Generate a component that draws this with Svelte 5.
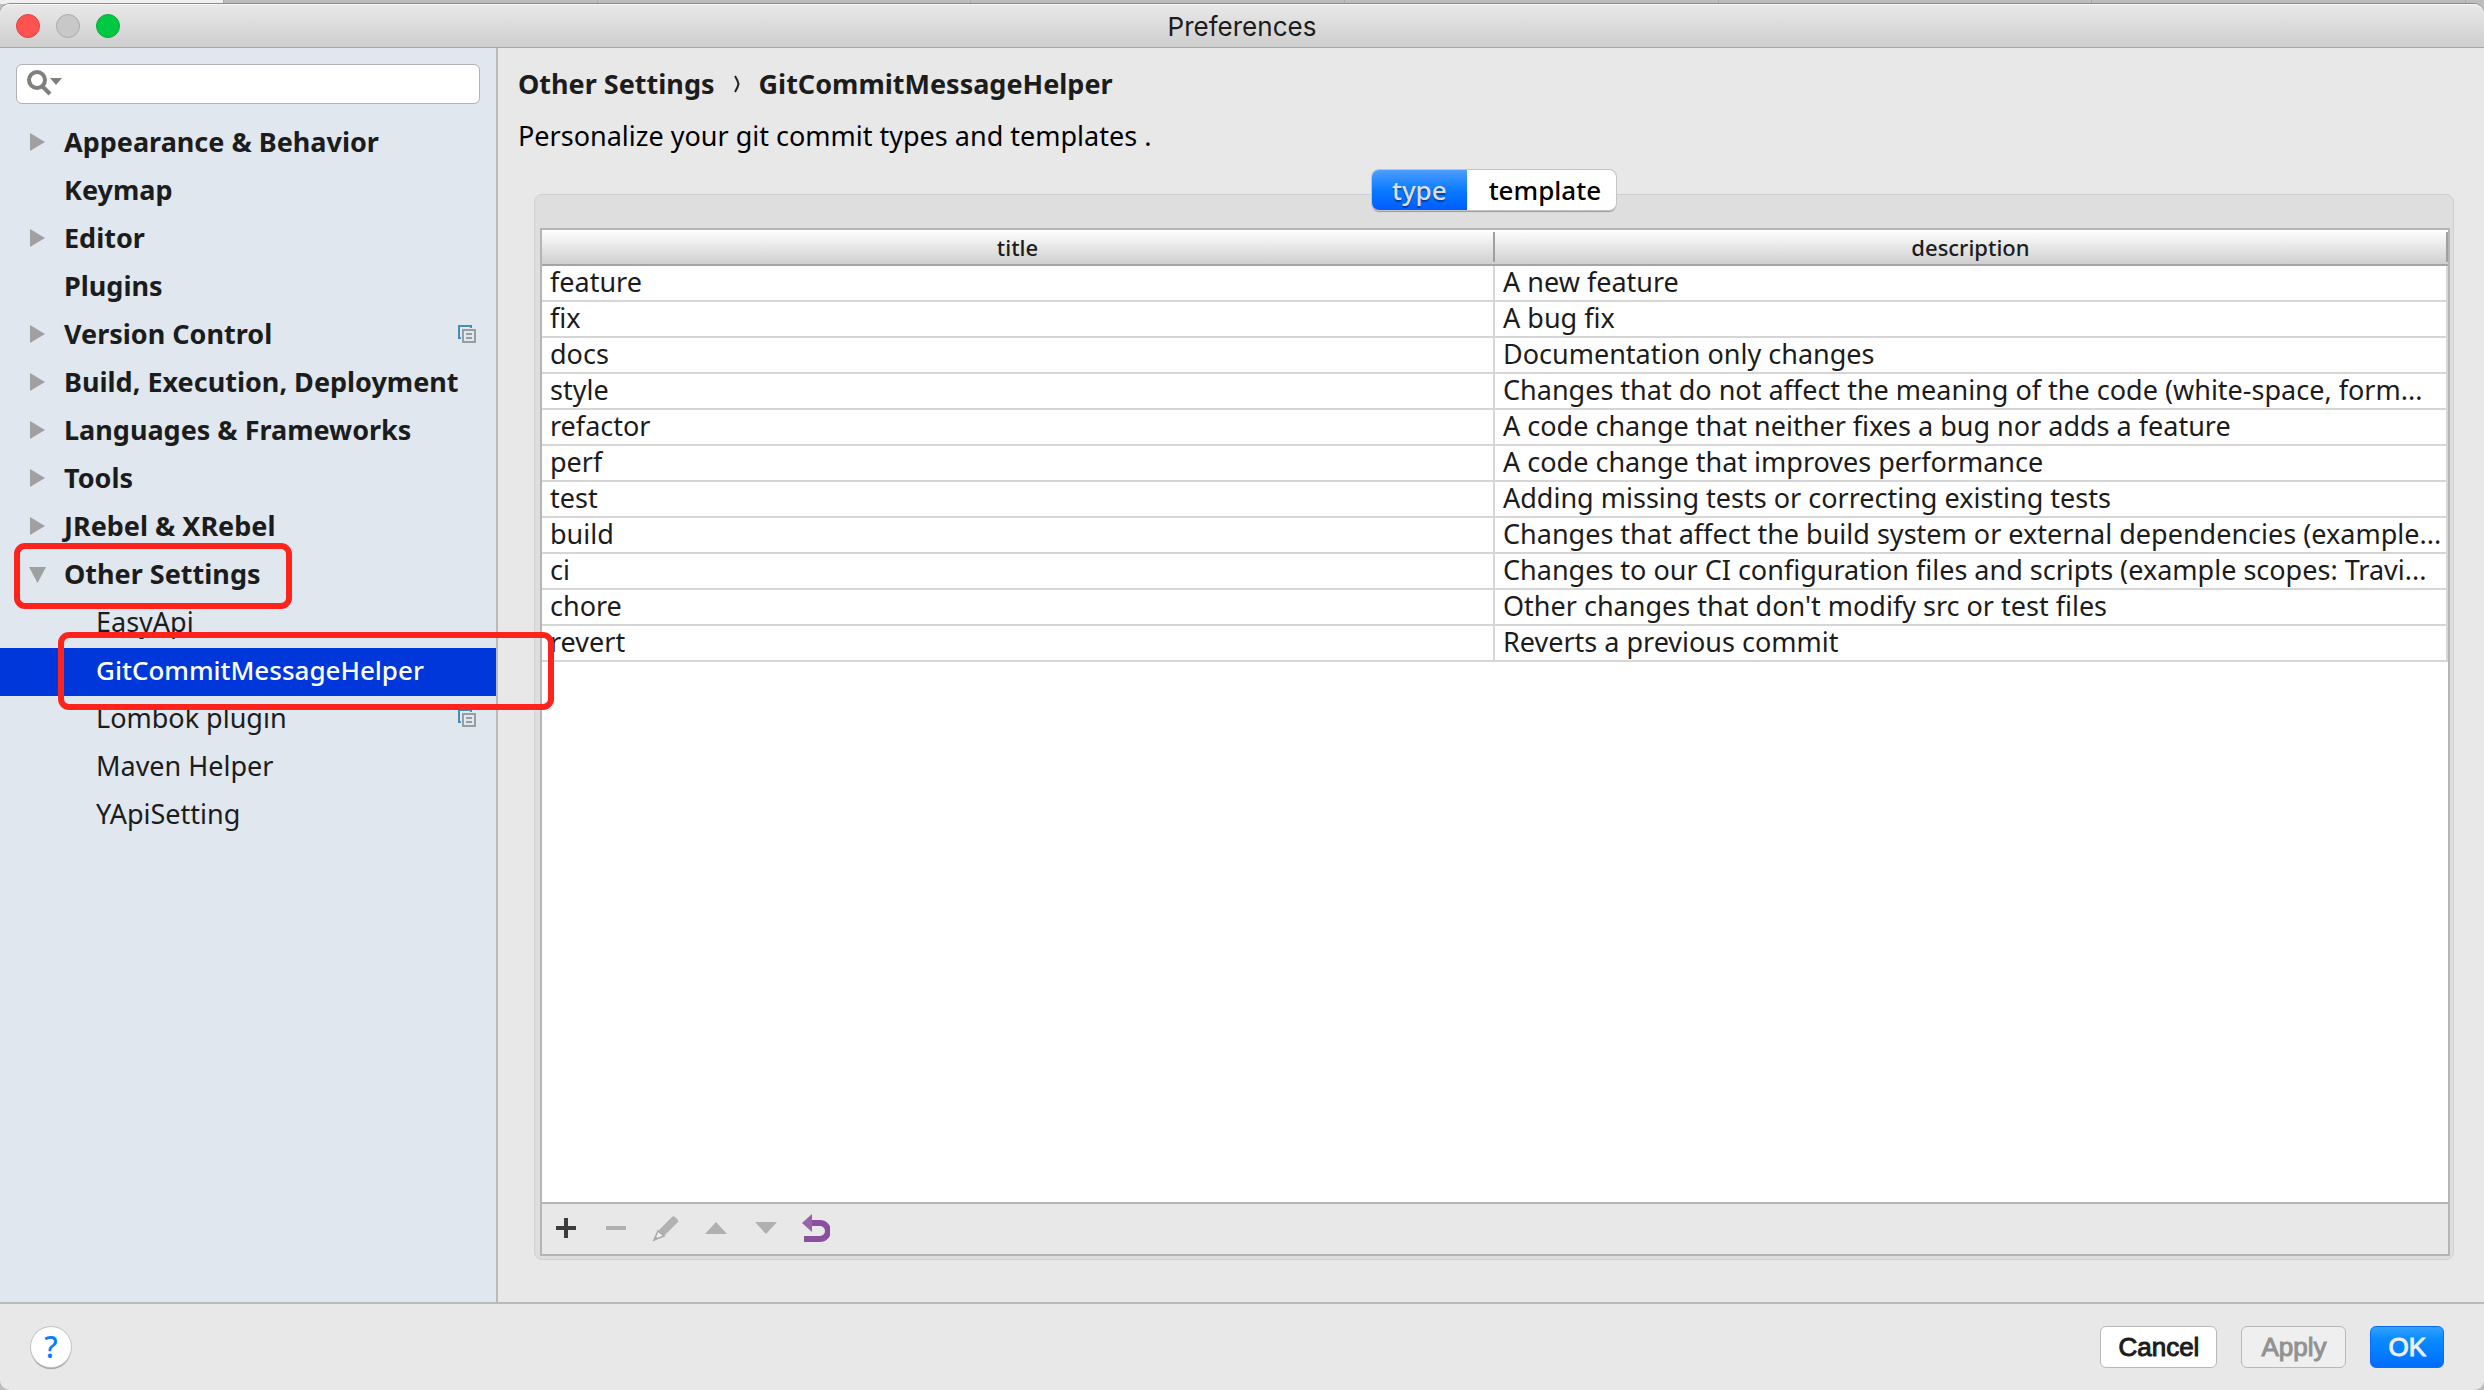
<script>
  let search = '';
  let activeTab = 'type';
  let selected = 'GitCommitMessageHelper';

  const tree = [
    { name: 'Appearance & Behavior', arrow: 'right' },
    { name: 'Keymap' },
    { name: 'Editor', arrow: 'right' },
    { name: 'Plugins' },
    { name: 'Version Control', arrow: 'right', project: true },
    { name: 'Build, Execution, Deployment', arrow: 'right' },
    { name: 'Languages & Frameworks', arrow: 'right' },
    { name: 'Tools', arrow: 'right' },
    { name: 'JRebel & XRebel', arrow: 'right' },
    { name: 'Other Settings', arrow: 'down', mark: 'parent' },
    { name: 'EasyApi', child: true },
    { name: 'GitCommitMessageHelper', child: true, mark: 'page' },
    { name: 'Lombok plugin', child: true, project: true },
    { name: 'Maven Helper', child: true },
    { name: 'YApiSetting', child: true }
  ];

  const types = [
    { title: 'feature', description: 'A new feature' },
    { title: 'fix', description: 'A bug fix' },
    { title: 'docs', description: 'Documentation only changes' },
    { title: 'style', description: 'Changes that do not affect the meaning of the code (white-space, form...' },
    { title: 'refactor', description: 'A code change that neither fixes a bug nor adds a feature' },
    { title: 'perf', description: 'A code change that improves performance' },
    { title: 'test', description: 'Adding missing tests or correcting existing tests' },
    { title: 'build', description: 'Changes that affect the build system or external dependencies (example...' },
    { title: 'ci', description: 'Changes to our CI configuration files and scripts (example scopes: Travi...' },
    { title: 'chore', description: "Other changes that don't modify src or test files" },
    { title: 'revert', description: 'Reverts a previous commit' }
  ];
</script>

<div class="screen">
  <div class="backdrop">
    <span class="front"></span>
    {#each Array(6) as _}
      <span></span>
    {/each}
  </div>
  <div class="window">
    <header class="titlebar">
      <div class="lights">
        <button class="light close" aria-label="Close"></button>
        <button class="light minimize" aria-label="Minimize" disabled></button>
        <button class="light zoom" aria-label="Zoom"></button>
      </div>
      <h1>Preferences</h1>
    </header>

    <div class="body">
      <aside>
        <label class="search">
          <svg width="36" height="30" viewBox="0 0 36 30" aria-hidden="true">
            <circle cx="10" cy="11" r="8" fill="none" stroke="#7f7f7f" stroke-width="4" />
            <path d="M15 17l8 8" stroke="#7f7f7f" stroke-width="4" />
            <path d="M23 9h12l-6 7z" fill="#7f7f7f" />
          </svg>
          <input type="text" aria-label="Search settings" bind:value={search} />
        </label>

        <ul class="tree">
          {#each tree as item}
            <li>
              <button
                class="row"
                class:child={item.child}
                class:selected={item.name === selected}
                on:click={() => (selected = item.name)}
              >
                <span class="arrow">
                  {#if item.arrow === 'right'}
                    <svg width="18" height="18" viewBox="0 0 18 18"><path d="M1 0l15 9-15 9z" fill="#a0a0a0" /></svg>
                  {:else if item.arrow === 'down'}
                    <svg width="18" height="18" viewBox="0 0 18 18"><path d="M0 2h17L8.500 18z" fill="#a0a0a0" /></svg>
                  {/if}
                </span>
                <span class="name">{item.name}</span>
                {#if item.project}
                  <svg class="project" width="18" height="18" viewBox="0 0 18 18">
                    <path d="M3 13H1V1h12v2" fill="none" stroke="#3f93bb" stroke-width="2" />
                    <path d="M5 5h12v12H5z" fill="none" stroke="#9a9da0" stroke-width="2" />
                    <path d="M8 9h6M8 13h6" stroke="#9a9da0" stroke-width="2" />
                  </svg>
                {/if}
              </button>
              {#if item.mark}
                <span class="mark {item.mark}"></span>
              {/if}
            </li>
          {/each}
        </ul>
      </aside>

      <main>
        <h2>
          <span>Other Settings</span>
          <svg width="6" height="18" viewBox="0 0 6 18" aria-hidden="true"><path d="M1 1q3 5 3.500 8Q4 12 1 17" fill="none" stroke="#222" stroke-width="2" /></svg>
          <span>GitCommitMessageHelper</span>
        </h2>
        <p>Personalize your git commit types and templates .</p>

        <div class="tabs">
          <button class:active={activeTab === 'type'} on:click={() => (activeTab = 'type')}>type</button>
          <button class:active={activeTab === 'template'} on:click={() => (activeTab = 'template')}>template</button>
        </div>

        <section class="panel">
          <div class="box">
            <table>
              <thead>
                <tr><th><span>title</span></th><th><span>description</span></th></tr>
              </thead>
              <tbody>
                {#each types as type}
                  <tr>
                    <td>{type.title}</td>
                    <td>{type.description}</td>
                  </tr>
                {/each}
              </tbody>
            </table>

            <div class="toolbar">
              <button aria-label="Add">
                <svg width="28" height="28" viewBox="0 0 28 28"><path d="M4 14h20M14 4v20" stroke="#3c3c3c" stroke-width="4" /></svg>
              </button>
              <button aria-label="Remove" disabled>
                <svg width="28" height="28" viewBox="0 0 28 28"><path d="M4 14h20" stroke="#b0b0b0" stroke-width="4" /></svg>
              </button>
              <button aria-label="Edit" disabled>
                <svg width="28" height="28" viewBox="0 0 28 28">
                  <path d="M6 17L20 3q1.500-1.500 3 0l2.500 2.500q1.500 1.500 0 3L12 22z" fill="#b2b2b2" />
                  <path d="M6 17l6 5-10 4z" fill="#efefef" stroke="#aaa" stroke-width="1.500" />
                  <path d="M2 26l1-4 3 2z" fill="#aaa" />
                </svg>
              </button>
              <button aria-label="Move up" disabled>
                <svg width="28" height="28" viewBox="0 0 28 28"><path d="M3 20L14 8l11 12z" fill="#b0b0b0" /></svg>
              </button>
              <button aria-label="Move down" disabled>
                <svg width="28" height="28" viewBox="0 0 28 28"><path d="M3 8l11 12L25 8z" fill="#b0b0b0" /></svg>
              </button>
              <button aria-label="Restore defaults">
                <svg width="28" height="28" viewBox="0 0 28 28">
                  <path d="M10 9h8a7.500 7.500 0 0 1 0 16H2" fill="none" stroke="#8a4f9e" stroke-width="6" />
                  <path d="M0 9L10 0v18z" fill="#9a62ab" />
                </svg>
              </button>
            </div>
          </div>
        </section>
      </main>
    </div>

    <footer>
      <button class="help" aria-label="Help">?</button>
      <div class="actions">
        <button>Cancel</button>
        <button disabled>Apply</button>
        <button class="primary">OK</button>
      </div>
    </footer>
  </div>
</div>

<style>
  :global(body) {
    margin: 0;
    background: #bdbdbd;
  }

  .screen {
    display: flex;
    flex-direction: column;
    min-height: 100vh;
    font-family: "Noto Sans", "Open Sans", sans-serif;
    font-size: 27px;
    line-height: 34px;
    color: #1c1c1c;
  }

  button {
    border: 0;
    padding: 0;
    background: none;
    color: inherit;
    font: inherit;
  }

  svg {
    display: block;
    flex: none;
  }

  .backdrop {
    display: flex;
    height: 4px;
    padding-right: 18px;
    background: #bdbdbd;
  }

  .backdrop span {
    flex: 1;
    border-right: 1px solid #a8a8a8;
  }

  .backdrop .front {
    flex: 0 0 223px;
    background: #f0f0f0;
  }

  .window {
    flex: 1;
    display: flex;
    flex-direction: column;
    background: #e8e8e8;
    border-radius: 10px;
  }

  .titlebar {
    display: grid;
    grid-template-columns: 1fr auto 1fr;
    align-items: center;
    box-sizing: border-box;
    height: 44px;
    padding: 0 16px;
    background: linear-gradient(#e9e9e9, #cecece);
    border-bottom: 1px solid #a6a6a6;
    border-radius: 10px 10px 0 0;
    box-shadow: 0 -1px 0 #8c8c8c, inset 0 1px 0 #f6f6f6;
  }

  .lights {
    display: flex;
    gap: 16px;
  }

  .light {
    box-sizing: border-box;
    width: 24px;
    height: 24px;
    border-radius: 50%;
    border: 1px solid #e2403e;
    background: #ff5351;
  }

  .light.minimize {
    border-color: #aaa;
    background: #c8c8c8;
  }

  .light.zoom {
    border-color: #0ba935;
    background: #00c844;
  }

  h1 {
    margin: 0;
    padding-top: 2px;
    font-family: Inter, Roboto, sans-serif;
    font-size: 26px;
    font-weight: 400;
  }

  .body {
    flex: 1;
    display: flex;
  }

  aside {
    flex: none;
    box-sizing: border-box;
    width: 498px;
    padding-top: 16px;
    background: #e0e7ee;
    border-right: 2px solid #bababa;
  }

  .search {
    display: flex;
    align-items: center;
    box-sizing: border-box;
    height: 40px;
    margin: 0 16px 16px;
    padding: 0 10px;
    background: #fff;
    border: 1px solid #b0b4b8;
    border-radius: 6px;
  }

  .search input {
    flex: 1;
    min-width: 0;
    border: 0;
    outline: 0;
    background: none;
    font: inherit;
  }

  .tree {
    margin: 0;
    padding: 0;
    list-style: none;
  }

  .tree li {
    position: relative;
  }

  .row {
    display: flex;
    align-items: center;
    box-sizing: border-box;
    width: 100%;
    height: 48px;
    padding: 0 20px 4px 29px;
    font-weight: 700;
    text-align: left;
    white-space: nowrap;
  }

  .row.child {
    font-weight: 400;
    padding-left: 61px;
  }

  .row.selected {
    background: #0037da;
    color: #fff;
    font-size: 26px;
    font-weight: 500;
  }

  .arrow {
    width: 18px;
    margin-right: 17px;
  }

  .name {
    flex: 1;
  }

  /* red outlines drawn over the tree */
  .mark {
    position: absolute;
    z-index: 1;
    box-sizing: border-box;
    border: 6px solid #ff231c;
    border-radius: 11px;
    pointer-events: none;
  }

  .mark.parent {
    top: -9px;
    left: 14px;
    width: 278px;
    height: 66px;
  }

  .mark.page {
    top: -16px;
    left: 58px;
    width: 496px;
    height: 78px;
  }

  main {
    flex: 1;
    min-width: 0;
    display: flex;
    flex-direction: column;
    padding: 19px 30px 42px 20px;
  }

  h2 {
    display: flex;
    align-items: center;
    gap: 19px;
    margin: 0;
    font-size: 27px;
    font-weight: 700;
  }

  p {
    margin: 18px 0 17px;
    color: #000;
  }

  .tabs {
    position: relative;
    display: flex;
    align-self: center;
    height: 40px;
    margin-left: 16px;
    border-radius: 7px;
    background: #fff;
    box-shadow: 0 0 0 1px #c4c4c4, 0 2px 1px #9a9a9a;
    font-size: 26px;
    font-weight: 500;
  }

  .tabs button {
    padding: 0 15px 0 22px;
    color: #000;
  }

  .tabs .active {
    padding: 0 20px;
    border-radius: 7px 0 0 7px;
    background: linear-gradient(#4d9dff, #0a7cff 50%, #005cff);
    color: #ddd;
    text-shadow: 0 2px 1px rgba(0, 0, 0, 0.4);
  }

  .panel {
    flex: 1;
    display: flex;
    margin: -16px 0 0 16px;
    padding: 33px 3px 3px 5px;
    border: 1px solid #d0d0d0;
    border-radius: 8px;
    background: #dedede;
  }

  .box {
    flex: 1;
    min-width: 0;
    display: flex;
    flex-direction: column;
    border: 2px solid #b5b5b5;
    background: #fff;
  }

  table {
    width: 100%;
    table-layout: fixed;
    border-collapse: separate;
    border-spacing: 0;
  }

  th {
    height: 34px;
    padding: 0;
    border-bottom: 2px solid #a5a5a5;
    background: linear-gradient(#fff, #cfcfcf);
    font-size: 22px;
    font-weight: 500;
    line-height: 30px;
  }

  th span {
    display: block;
    border-right: 2px solid #a0a0a0;
  }

  td {
    height: 34px;
    padding: 0 6px 0 8px;
    border-right: 2px solid #d6d6d6;
    border-bottom: 2px solid #d6d6d6;
    line-height: 32px;
    vertical-align: top;
    white-space: nowrap;
  }

  .toolbar {
    display: flex;
    align-items: center;
    gap: 22px;
    box-sizing: border-box;
    height: 52px;
    margin-top: auto;
    padding: 0 10px 2px;
    border-top: 2px solid #b5b5b5;
    background: #e8e8e8;
  }

  footer {
    display: flex;
    align-items: center;
    justify-content: space-between;
    height: 86px;
    padding: 0 40px 0 31px;
    border-top: 2px solid #bababa;
    border-radius: 0 0 10px 10px;
  }

  .help {
    width: 40px;
    height: 40px;
    border-radius: 50%;
    background: #fff;
    box-shadow: 0 0 0 1px #c4c4c4, 0 2px 1px #9a9a9a;
    color: #0a7cff;
    font-size: 30px;
    font-weight: 500;
  }

  .actions {
    display: flex;
    gap: 24px;
    font-family: "Liberation Sans", Arial, sans-serif;
    font-size: 26px;
  }

  .actions button {
    box-sizing: border-box;
    height: 42px;
    padding: 0 17px;
    border: 1px solid #b8b8b8;
    border-radius: 6px;
    background: #fff;
    -webkit-text-stroke: 1px currentColor;
  }

  .actions button:disabled {
    padding: 0 19px;
    background: #efefef;
    color: #929292;
  }

  .actions .primary {
    border-color: #0a6cff;
    background: linear-gradient(#35a2ff, #0a8cff 30%, #006cff);
    color: #eee;
  }
</style>
